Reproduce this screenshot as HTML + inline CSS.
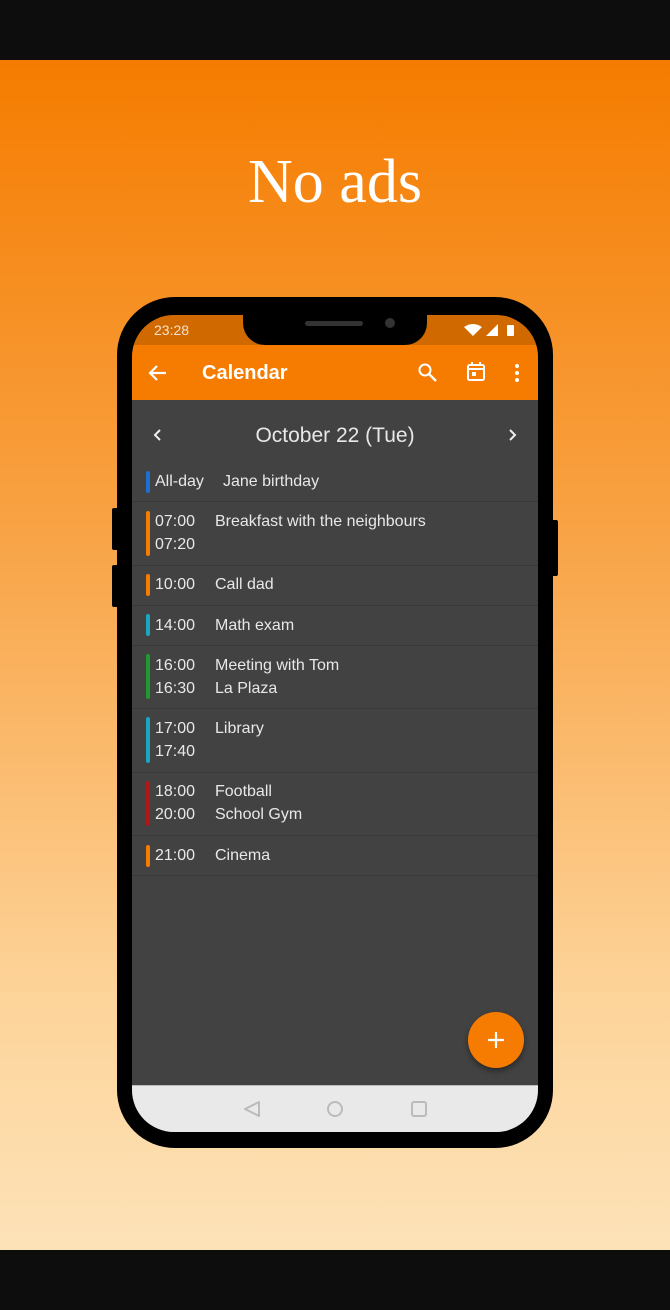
<!DOCTYPE html>
<html><head><meta charset="utf-8"><style>
*{margin:0;padding:0;box-sizing:border-box}
body{width:670px;height:1310px;position:relative;overflow:hidden;font-family:"Liberation Sans","DejaVu Sans",sans-serif;background:linear-gradient(#f57c00 0px,#f57c00 60px,#f8a040 500px,#fdd49a 1000px,#fde2b8 1250px)}
.a{position:absolute}
.t{position:absolute;color:#e8e8e8;font-size:16px;line-height:20px;white-space:nowrap}
.bar{position:absolute;left:146px;width:4px;border-radius:2px}
.div{position:absolute;left:132px;width:406px;height:1px;background:#383838}
</style></head><body>
<div class="a" style="left:0;top:0;width:670px;height:60px;background:#0d0d0d"></div>
<div class="a" style="left:0;top:1250px;width:670px;height:60px;background:#0d0d0d"></div>
<div class="a" style="left:0;top:146px;width:670px;text-align:center;color:#fff;font-family:'Liberation Serif','DejaVu Serif',serif;font-size:62px;line-height:72px">No ads</div>
<div class="a" style="left:112px;top:508px;width:8px;height:42px;background:#000;border-radius:2px"></div>
<div class="a" style="left:112px;top:565px;width:8px;height:42px;background:#000;border-radius:2px"></div>
<div class="a" style="left:550px;top:520px;width:8px;height:56px;background:#000;border-radius:2px"></div>
<div class="a" style="left:117px;top:297px;width:436px;height:851px;background:#000;border-radius:58px"></div>
<div class="a" style="left:132px;top:315px;width:406px;height:817px;border-radius:42px;overflow:hidden;background:#424242">
  <div class="a" style="left:0;top:0;width:406px;height:30px;background:#d06a00"></div>
  <div class="a" style="left:0;top:30px;width:406px;height:55px;background:#f57c00"></div>
  <div class="a" style="left:0;top:770px;width:406px;height:47px;background:#e9e9e9;border-top:1px solid #bbb"></div>
</div>
<div class="a" style="left:243px;top:310px;width:184px;height:35px;background:#000;border-radius:0 0 22px 22px"></div>
<div class="a" style="left:305px;top:321px;width:58px;height:5px;background:#333;border-radius:3px"></div>
<div class="a" style="left:385px;top:318px;width:10px;height:10px;background:#333;border-radius:50%"></div>
<div class="a" style="left:154px;top:322px;color:#f3e0cc;font-size:14px">23:28</div>
<svg class="a" style="left:462px;top:322px" width="60" height="16" viewBox="0 0 60 16">
<path d="M2 5 Q11 -1 20 5 L11 14Z" fill="#fff"/><path d="M24 14 L36 2 L36 14Z" fill="#fff"/><rect x="45" y="3" width="7" height="11" rx="1" fill="#fff"/></svg>
<svg class="a" style="left:148px;top:363px" width="20" height="20" viewBox="0 0 20 20"><path d="M18 10H3M9 3L2 10l7 7" stroke="#fff" stroke-width="2.2" fill="none"/></svg>
<div class="a" style="left:202px;top:361px;color:#fff;font-size:20px;font-weight:bold;line-height:24px">Calendar</div>
<svg class="a" style="left:417px;top:362px" width="22" height="22" viewBox="0 0 22 22"><circle cx="8" cy="8" r="5.5" stroke="#fff" stroke-width="2" fill="none"/><path d="M12 12l7 7" stroke="#fff" stroke-width="2.4"/></svg>
<svg class="a" style="left:466px;top:361px" width="20" height="22" viewBox="0 0 20 22"><rect x="2" y="4" width="16" height="15" rx="1.5" stroke="#fff" stroke-width="2" fill="none"/><path d="M2 8h16M6 1v4M14 1v4" stroke="#fff" stroke-width="2"/><rect x="6" y="11" width="4" height="4" fill="#fff"/></svg>
<svg class="a" style="left:512px;top:363px" width="10" height="20" viewBox="0 0 10 20"><circle cx="5" cy="3" r="2" fill="#fff"/><circle cx="5" cy="10" r="2" fill="#fff"/><circle cx="5" cy="17" r="2" fill="#fff"/></svg>
<svg class="a" style="left:152px;top:428px" width="12" height="14" viewBox="0 0 12 14"><path d="M8 2L3 7l5 5" stroke="#eee" stroke-width="2" fill="none"/></svg>
<div class="a" style="left:132px;top:423px;width:406px;text-align:center;color:#e8e8e8;font-size:21px;line-height:26px">October 22 (Tue)</div>
<svg class="a" style="left:506px;top:428px" width="12" height="14" viewBox="0 0 12 14"><path d="M4 2l5 5-5 5" stroke="#eee" stroke-width="2" fill="none"/></svg>
<div class="bar" style="top:471px;height:22px;background:#1e6fd0"></div>
<div class="t" style="left:155px;top:472px">All-day</div><div class="t" style="left:223px;top:472px">Jane birthday</div>
<div class="div" style="top:501px"></div>
<div class="bar" style="top:511px;height:45px;background:#f57c00"></div>
<div class="t" style="left:155px;top:512px">07:00</div><div class="t" style="left:215px;top:512px">Breakfast with the neighbours</div>
<div class="t" style="left:155px;top:535px">07:20</div>
<div class="div" style="top:565px"></div>
<div class="bar" style="top:574px;height:22px;background:#f57c00"></div>
<div class="t" style="left:155px;top:575px">10:00</div><div class="t" style="left:215px;top:575px">Call dad</div>
<div class="div" style="top:605px"></div>
<div class="bar" style="top:614px;height:22px;background:#1aa5c0"></div>
<div class="t" style="left:155px;top:616px">14:00</div><div class="t" style="left:215px;top:616px">Math exam</div>
<div class="div" style="top:645px"></div>
<div class="bar" style="top:654px;height:45px;background:#1e9a2e"></div>
<div class="t" style="left:155px;top:656px">16:00</div><div class="t" style="left:215px;top:656px">Meeting with Tom</div>
<div class="t" style="left:155px;top:679px">16:30</div><div class="t" style="left:215px;top:679px">La Plaza</div>
<div class="div" style="top:708px"></div>
<div class="bar" style="top:717px;height:46px;background:#1aa5c0"></div>
<div class="t" style="left:155px;top:719px">17:00</div><div class="t" style="left:215px;top:719px">Library</div>
<div class="t" style="left:155px;top:742px">17:40</div>
<div class="div" style="top:772px"></div>
<div class="bar" style="top:781px;height:45px;background:#b01818"></div>
<div class="t" style="left:155px;top:782px">18:00</div><div class="t" style="left:215px;top:782px">Football</div>
<div class="t" style="left:155px;top:805px">20:00</div><div class="t" style="left:215px;top:805px">School Gym</div>
<div class="div" style="top:835px"></div>
<div class="bar" style="top:845px;height:22px;background:#f57c00"></div>
<div class="t" style="left:155px;top:846px">21:00</div><div class="t" style="left:215px;top:846px">Cinema</div>
<div class="div" style="top:875px"></div>
<div class="a" style="left:468px;top:1012px;width:56px;height:56px;border-radius:50%;background:#f57c00;box-shadow:0 3px 6px rgba(0,0,0,.4)"></div>
<svg class="a" style="left:486px;top:1030px" width="20" height="20" viewBox="0 0 20 20"><path d="M10 2v16M2 10h16" stroke="#fff" stroke-width="2.2"/></svg>
<svg class="a" style="left:240px;top:1098px" width="200" height="22" viewBox="0 0 200 22"><path d="M19 4L5 11l14 7Z" stroke="#bbb" stroke-width="2" fill="none" stroke-linejoin="round"/><circle cx="95" cy="11" r="7" stroke="#bbb" stroke-width="2" fill="none"/><rect x="172" y="4" width="14" height="14" rx="2" stroke="#bbb" stroke-width="2" fill="none"/></svg>
</body></html>
